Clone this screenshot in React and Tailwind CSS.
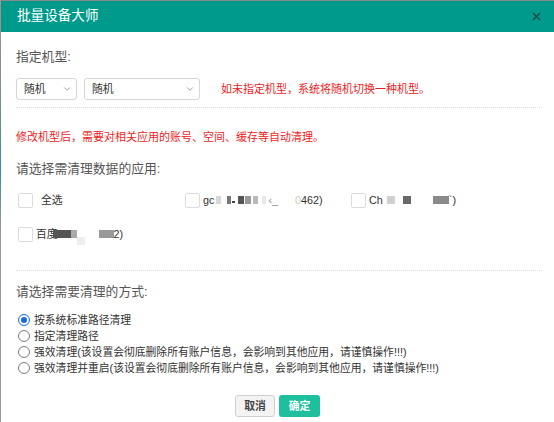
import React, { useState } from "react";
import { X, ChevronDown } from "lucide-react";

const font = { fontFamily: '"Liberation Sans", "Noto Sans CJK SC", sans-serif' };

const Select = ({ width }) => (
  <div
    className={`${width} h-[22px] border border-[#d6d6d6] rounded-[3px] bg-white flex items-center justify-between pl-[7px] pr-[4px] text-[10.8px] text-[#333]`}
  >
    <span>随机</span>
    <ChevronDown size={10} strokeWidth={1.5} className="text-[#666]" />
  </div>
);

const Box = () => (
  <span className="w-[15px] h-[15px] shrink-0 border border-[#dcdcdc] rounded-[2px] bg-white" />
);

const Blk = ({ w, c, h = "h-[8px]" }) => (
  <span className={`inline-block ${w} ${h} ${c}`} />
);

const Radio = ({ checked, label, onClick }) => (
  <div className="h-[16px] flex items-center cursor-pointer" onClick={onClick}>
    {checked ? (
      <span className="w-[12px] h-[12px] rounded-full border-[1.5px] border-[#1668e3] bg-white flex items-center justify-center">
        <span className="w-[6px] h-[6px] rounded-full bg-[#1668e3]" />
      </span>
    ) : (
      <span className="w-[12px] h-[12px] rounded-full border border-[#7a7a7a] bg-white" />
    )}
    <span className="ml-[4px] text-[10.8px] text-[#333]">{label}</span>
  </div>
);

const options = [
  "按系统标准路径清理",
  "指定清理路径",
  "强效清理(该设置会彻底删除所有账户信息，会影响到其他应用，请谨慎操作!!!)",
  "强效清理并重启(该设置会彻底删除所有账户信息，会影响到其他应用，请谨慎操作!!!)",
];

export default function App() {
  const [mode, setMode] = useState(0);

  return (
    <div className="w-[554px] h-[422px] flex bg-white overflow-hidden" style={font}>
      <div className="w-px h-full bg-[linear-gradient(to_bottom,#b98a8a_0%,#6d9a7a_25%,#2f8fa6_40%,#9a9a9a_55%,#9a9a9a_100%)]" />
      <div className="flex-1 flex flex-col border-t border-[#8a8a8a]">
        <header className="h-[31px] bg-[#009a8c] flex items-center justify-between pl-4 pr-[11px]">
          <span className="text-[13.6px] text-white">批量设备大师</span>
          <X size={13} strokeWidth={2} className="text-[#24423f]" />
        </header>

        <div className="pl-[15px] pr-[12px] pt-[15px]">
          <p className="h-[20px] leading-[20px] text-[12.8px] text-[#555]">指定机型:</p>

          <div className="mt-[11px] flex items-center">
            <Select width="w-[61px]" />
            <div className="ml-[7px]">
              <Select width="w-[116px]" />
            </div>
            <span className="ml-[21px] text-[11px] text-[#ee1c25]">
              如未指定机型，系统将随机切换一种机型。
            </span>
          </div>

          <div className="mt-[7px] border-t border-dotted border-[#dedede]" />

          <p className="mt-[21px] h-[16px] leading-[16px] text-[11px] text-[#ee1c25]">
            修改机型后，需要对相关应用的账号、空间、缓存等自动清理。
          </p>

          <p className="mt-[14px] h-[20px] leading-[20px] text-[12.8px] text-[#555]">
            请选择需清理数据的应用:
          </p>

          <div className="mt-[11px] ml-[2px] grid grid-cols-[167px_166px_1fr] gap-y-[14px] text-[10.8px] text-[#333]">
            <div className="h-[20px] flex items-center">
              <Box />
              <span className="ml-[8px]">全选</span>
            </div>
            <div className="h-[20px] flex items-center">
              <Box />
              <span className="ml-[3px] flex items-center">
                gc
                <Blk w="w-[5px] ml-[2px]" c="bg-[#d8d8d8]" />
                <Blk w="w-[4px] ml-[6px]" c="bg-[#777]" />
                <Blk w="w-[3px] ml-[1px]" c="bg-[#444]" h="h-[2px] self-end mb-[5px]" />
                <Blk w="w-[6px] ml-[3px]" c="bg-[#555]" />
                <Blk w="w-[6px] ml-[1px]" c="bg-[#999]" />
                <Blk w="w-[5px] ml-[2px]" c="bg-[#bbb]" />
                <Blk w="w-[4px] ml-[4px]" c="bg-[#e8e8e8]" />
                <span className="ml-[2px] text-[#888]">‹_</span>
                <span className="ml-[17px] text-[#ccc]">0</span>
                <span>462)</span>
              </span>
            </div>
            <div className="h-[20px] flex items-center">
              <Box />
              <span className="ml-[3px] flex items-center">
                Ch
                <Blk w="w-[8px] ml-[4px]" c="bg-[#d0d0d0]" />
                <Blk w="w-[8px] ml-[8px]" c="bg-[#6a6a6a]" />
                <Blk w="w-[16px] ml-[22px]" c="bg-[#8a8a8a]" />
                <span>`)</span>
              </span>
            </div>
            <div className="h-[20px] flex items-center col-span-3">
              <Box />
              <span className="ml-[3px] flex items-center">
                百度
                <Blk w="w-[18px] -ml-[5px] relative" c="bg-[#555]" />
                <Blk w="w-[6px]" c="bg-[#aaa]" />
                <span className="w-[8px] h-[8px] self-end mb-[-3px] bg-[#eee]" />
                <Blk w="w-[15px] ml-[14px]" c="bg-[#999]" />
                <span>2)</span>
              </span>
            </div>
          </div>

          <div className="mt-[26px] border-t border-dotted border-[#dedede]" />

          <p className="mt-[11px] h-[20px] leading-[20px] text-[12.8px] text-[#555]">
            请选择需要清理的方式:
          </p>

          <div className="mt-[10px] ml-[2px] flex flex-col">
            {options.map((o, i) => (
              <Radio key={i} checked={mode === i} label={o} onClick={() => setMode(i)} />
            ))}
          </div>

          <div className="mt-[19px] flex justify-center gap-[4px] pr-[3px]">
            <button className="w-[40px] h-[22px] rounded-[3px] border border-[#cfcfcf] bg-[#f3f3f3] text-[10.8px] font-bold text-[#444]">
              取消
            </button>
            <button className="w-[41px] h-[22px] rounded-[3px] bg-[#1dbf9f] text-[10.8px] font-bold text-white">
              确定
            </button>
          </div>
        </div>
      </div>
    </div>
  );
}
